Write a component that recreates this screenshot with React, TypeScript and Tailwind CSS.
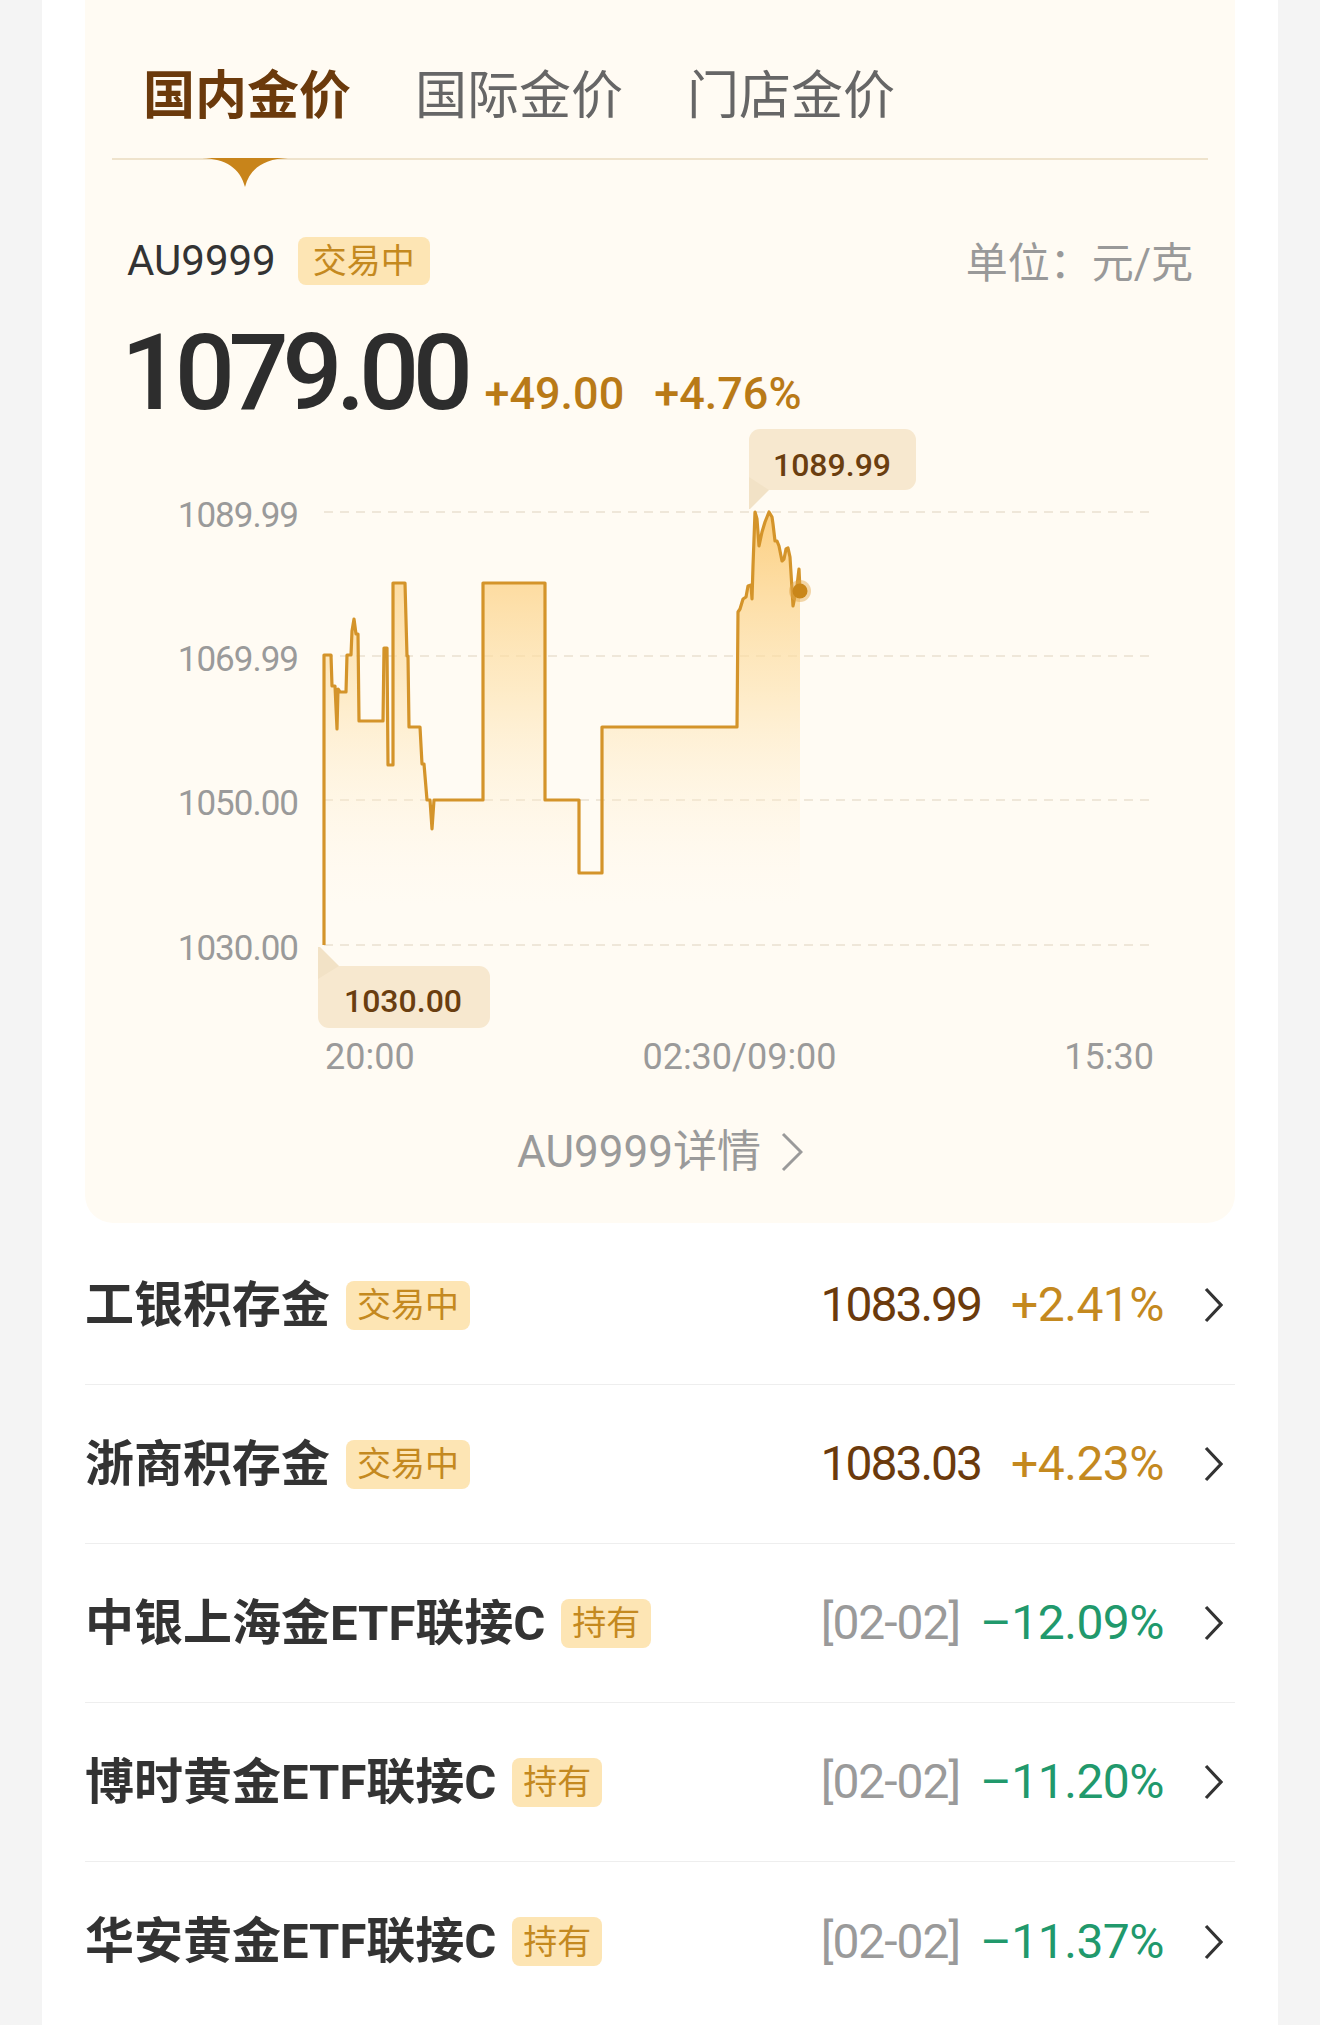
import React from "react";

const LINE =
  "M324,946 L324,656 L331,656 L332,687 L335,687 L337,730 L338,690 L340,693 L346,693 L347,656 L351,656 L352,632 L354,620 L356,635 L358,635 L359,722 L383,722 L384,649 L387,649 L388,766 L393,766 L393,584 L405,584 L407,657 L408,657 L409,728 L420,728 L422,765 L424,765 L427,801 L430,801 L432,830 L434,801 L483,801 L483,584 L545,584 L545,801 L579,801 L579,874 L602,874 L602,728 L737,728 L738,613 L740,610 L743,600 L746,598 L748,587 L751,586 L752,600 L753,567 L755,513 L757,520 L759,547 L762,533 L765,523 L769,513 L772,518 L773,525 L775,542 L777,542 L779,547 L782,562 L784,560 L786,550 L788,549 L790,558 L792,590 L793,607 L795,597 L797,587 L799,570 L800,592";

const grid = [
  { y: 513, label: "1089.99" },
  { y: 657, label: "1069.99" },
  { y: 801, label: "1050.00" },
  { y: 946, label: "1030.00" },
];

const rows = [
  { name: "工银积存金", tag: "交易中", price: "1083.99", pct: "+2.41%" },
  { name: "浙商积存金", tag: "交易中", price: "1083.03", pct: "+4.23%" },
  { name: "中银上海金ETF联接C", tag: "持有", date: "[02-02]", pct: "–12.09%" },
  { name: "博时黄金ETF联接C", tag: "持有", date: "[02-02]", pct: "–11.20%" },
  { name: "华安黄金ETF联接C", tag: "持有", date: "[02-02]", pct: "–11.37%" },
];

function Badge({ children }: { children: React.ReactNode }) {
  return (
    <span className="ml-[16px] flex h-[49px] items-center rounded-[8px] bg-[#fde5b4] px-[11px] text-[34px] leading-none text-[#c4891f]">
      {children}
    </span>
  );
}

function Chevron({ color = "#333", w = 19, h = 36, sw = 3.2 }: { color?: string; w?: number; h?: number; sw?: number }) {
  return (
    <svg width={w} height={h} viewBox={`0 0 ${w} ${h}`} fill="none">
      <polyline
        points={`2,2 ${w - 2},${h / 2} 2,${h - 2}`}
        stroke={color}
        strokeWidth={sw}
        strokeLinejoin="miter"
      />
    </svg>
  );
}

function Chart() {
  return (
    <svg className="mt-[3px] block" width="1148" height="600" viewBox="85 430 1148 600">
      <defs>
        <linearGradient id="fill" x1="0" y1="513" x2="0" y2="905" gradientUnits="userSpaceOnUse">
          <stop offset="0" stopColor="#fccd7c" stopOpacity="0.95" />
          <stop offset="0.45" stopColor="#fde0a8" stopOpacity="0.6" />
          <stop offset="1" stopColor="#fff4e0" stopOpacity="0" />
        </linearGradient>
      </defs>

      {grid.map((g) => (
        <g key={g.label}>
          <line x1="324" x2="1150" y1={g.y} y2={g.y} stroke="#efe7d9" strokeWidth="2" strokeDasharray="9 7" />
          <text
            x="298"
            y={g.y + 15}
            textAnchor="end"
            fontFamily="Roboto, sans-serif"
            fontSize="35"
            letterSpacing="-1"
            fill="#9a9a9a"
          >
            {g.label}
          </text>
        </g>
      ))}

      <path d={LINE + " L800,946 Z"} fill="url(#fill)" />
      <path d={LINE} fill="none" stroke="#d4942a" strokeWidth="3.2" strokeLinejoin="round" />

      <circle cx="800" cy="592" r="11" fill="#e2a64a" opacity="0.45" />
      <circle cx="800" cy="592" r="7.5" fill="#c9861a" />

      {/* max tooltip */}
      <rect x="749" y="430" width="167" height="61" rx="11" fill="#f7e8cf" />
      <polygon points="749,478 769,491 750,510 749,510" fill="#f2e2c6" />
      <text x="832" y="477" textAnchor="middle" fontFamily="Roboto, sans-serif" fontWeight="500" fontSize="32" fill="#6a3e10">
        1089.99
      </text>

      {/* min tooltip */}
      <rect x="318" y="967" width="172" height="62" rx="11" fill="#f7e8cf" />
      <polygon points="318,980 339,967 320,948 318,948" fill="#f2e2c6" />
      <text x="403" y="1013" textAnchor="middle" fontFamily="Roboto, sans-serif" fontWeight="500" fontSize="32" fill="#6a3e10">
        1030.00
      </text>
    </svg>
  );
}

export default function App() {
  return (
    <div className="min-h-[2025px] bg-[#f4f4f4] font-['Roboto','Noto_Sans_CJK_SC',sans-serif]">
      <div className="mx-[42px] min-h-[2025px] bg-white px-[43px]">
        {/* price card */}
        <div className="rounded-b-[28px] bg-[#fffbf3] pb-[49px]">
          <div className="relative mx-[27px] flex gap-[64px] border-b-2 border-[#efe3cc] pb-[35px] pl-[31px] pt-[71px] text-[52px] leading-none">
            <span className="font-bold text-[#6b3a0c]">国内金价</span>
            <span className="text-[#666]">国际金价</span>
            <span className="text-[#666]">门店金价</span>
            <svg className="absolute left-[90px] top-full" width="86" height="29" viewBox="0 0 86 29">
              <path d="M0 0 H86 C62 1 48 10 43 29 C38 10 24 1 0 0 Z" fill="#c8841a" />
            </svg>
          </div>

          <div className="mt-[77px] flex h-[48px] items-center justify-between px-[42px]">
            <div className="flex items-center">
              <span className="text-[42px] leading-none text-[#333]">AU9999</span>
              <span className="ml-[22px] flex h-[48px] items-center rounded-[8px] bg-[#fde5b4] px-[15px] text-[34px] leading-none text-[#c4891f]">
                交易中
              </span>
            </div>
            <span className="pt-[6px] text-[42px] leading-none text-[#999]">单位：元/克</span>
          </div>

          <div className="mt-[35px] flex items-baseline pl-[36px]">
            <span className="text-[106px] font-medium leading-none tracking-[-6.5px] text-[#2d2d2d]">1079.00</span>
            <span className="ml-[18px] text-[45px] font-medium leading-none text-[#b97a17]">+49.00</span>
            <span className="ml-[30px] text-[45px] font-medium leading-none text-[#b97a17]">+4.76%</span>
          </div>

          <Chart />

          <div className="mt-[10px] flex justify-between pl-[240px] pr-[81px] text-[36px] leading-none text-[#9a9a9a]">
            <span>20:00</span>
            <span>02:30/09:00</span>
            <span>15:30</span>
          </div>

          <div className="mt-[55px] flex items-center justify-center text-[44px] leading-none text-[#9a9a9a]">
            <span>AU9999详情</span>
            <span className="ml-[20px]">
              <Chevron color="#9a9a9a" w={22} h={40} sw={3} />
            </span>
          </div>
        </div>

        {/* list */}
        <div className="mt-[3px]">
          {rows.map((r, i) => (
            <div
              key={r.name}
              className={`flex h-[159px] items-center ${i < rows.length - 1 ? "border-b border-[#eeeeee]" : ""}`}
            >
              <span className="text-[49px] font-bold leading-none text-[#333]">{r.name}</span>
              <Badge>{r.tag}</Badge>
              <div className="ml-auto flex items-center pr-[12px] text-[48px] leading-none">
                {r.price ? (
                  <span className="tracking-[-2px] text-[#6b3a0c]">{r.price}</span>
                ) : (
                  <span className="tracking-[-1px] text-[#9a9a9a]">{r.date}</span>
                )}
                <span
                  className={`tracking-[-0.5px] ${r.price ? "ml-[30px] text-[#c4891f]" : "ml-[20px] text-[#21996c]"}`}
                >
                  {r.pct}
                </span>
                <span className="ml-[40px]">
                  <Chevron />
                </span>
              </div>
            </div>
          ))}
        </div>
      </div>
    </div>
  );
}
